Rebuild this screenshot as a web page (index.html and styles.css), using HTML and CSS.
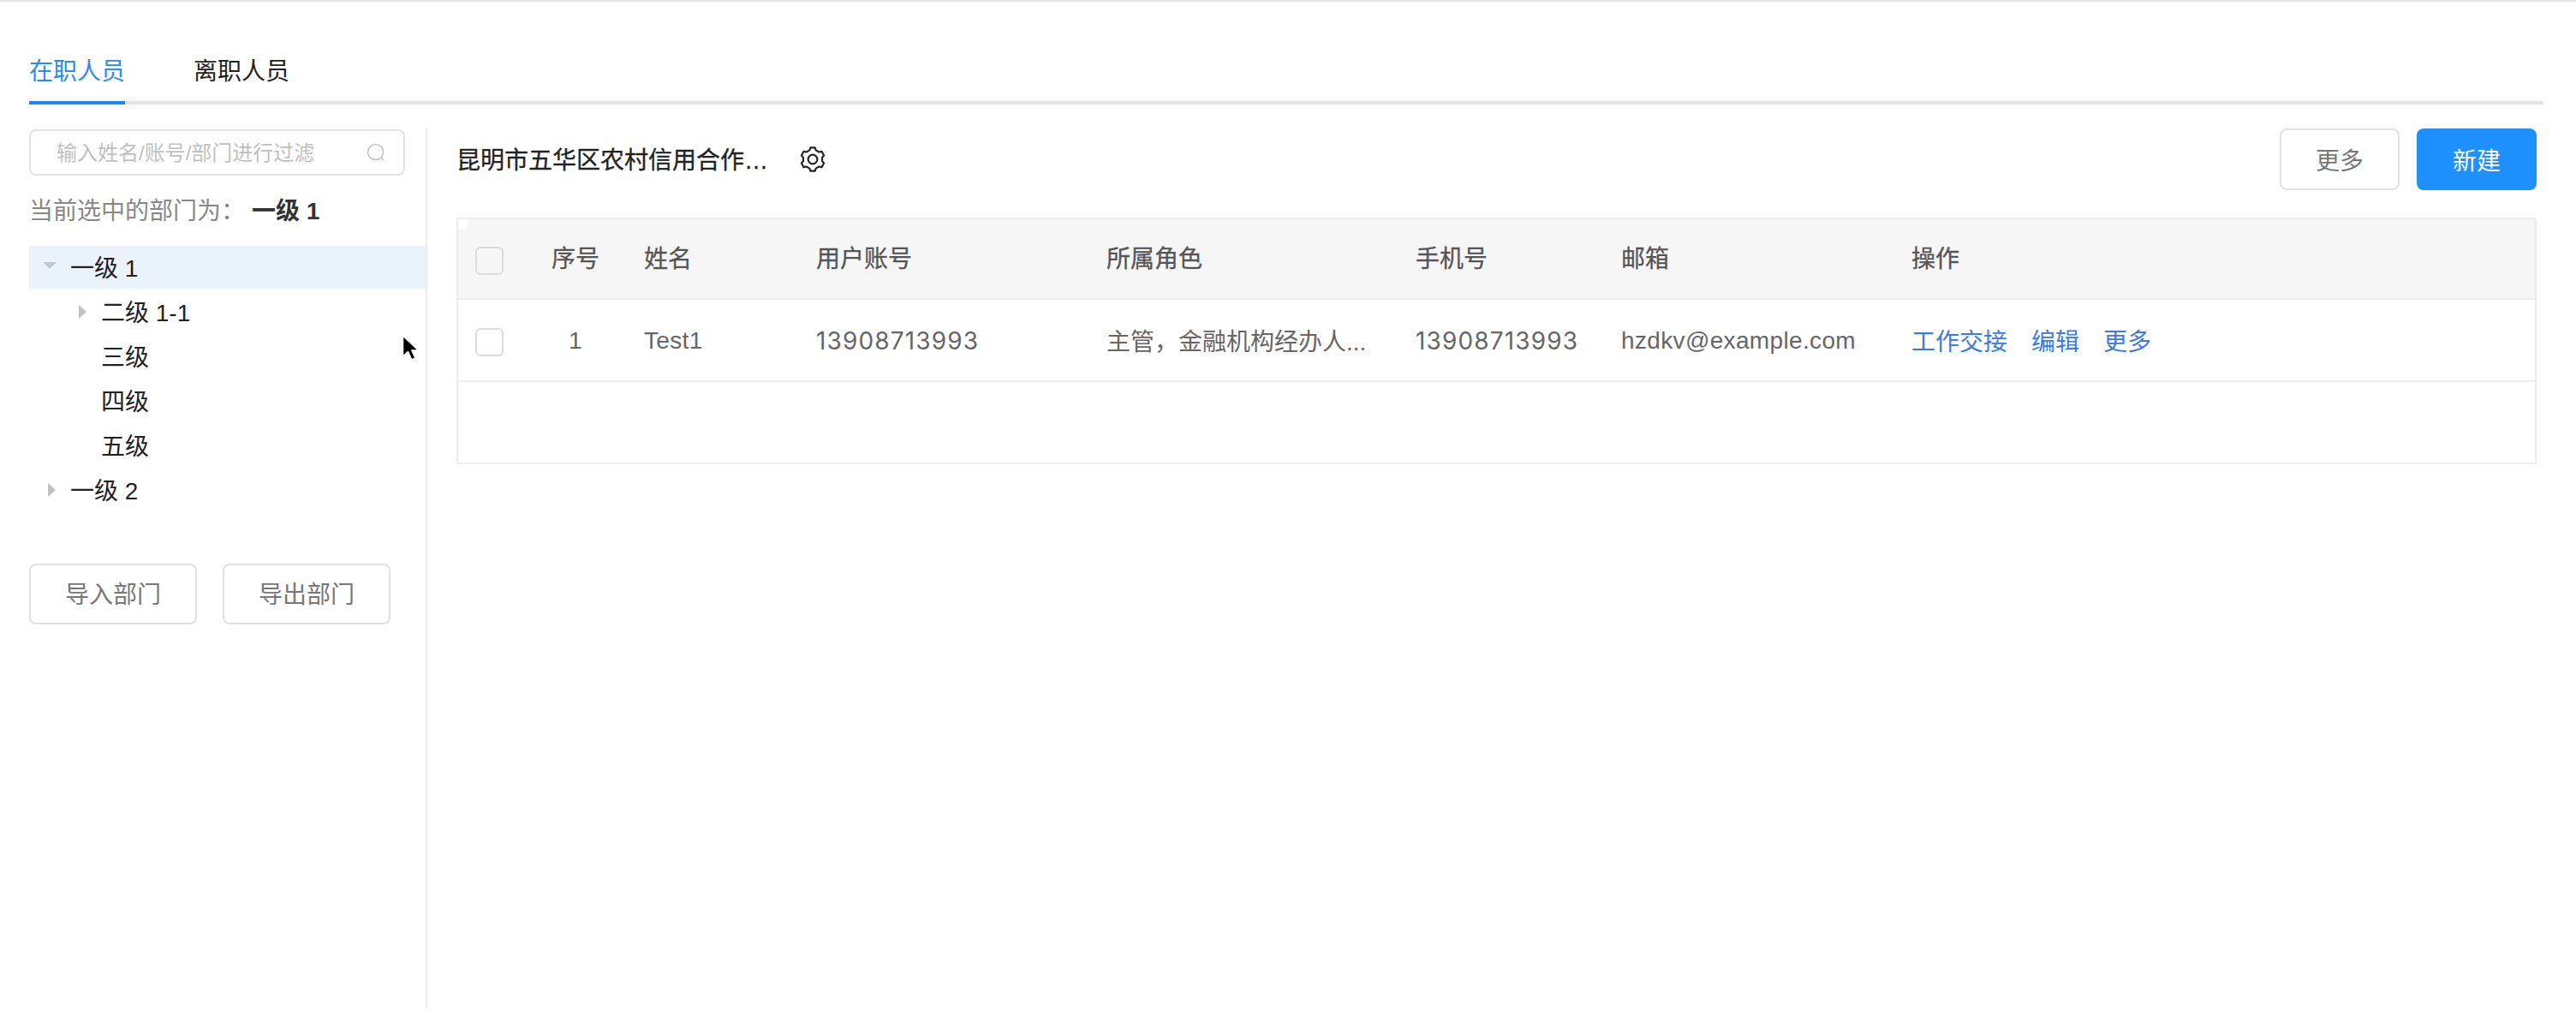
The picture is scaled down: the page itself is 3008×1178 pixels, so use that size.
FILE: index.html
```html
<!DOCTYPE html>
<html lang="zh-CN">
<head>
<meta charset="utf-8">
<title>人员管理</title>
<link rel="stylesheet" href="styles.css">
</head>
<body>
<div class="page">
  <nav class="tabs">
    <a class="tab tab-active">在职人员</a>
    <a class="tab">离职人员</a>
  </nav>
  <div class="content">
    <aside class="sidebar">
      <div class="search">
        <span class="search-text">输入姓名/账号/部门进行过滤</span>
        <svg class="search-icon" viewBox="0 0 22 22" width="22" height="22"><circle cx="10.5" cy="10.5" r="9" fill="none" stroke="#c4c4c4" stroke-width="1.6"/><path d="M17 17l3 3" stroke="#c4c4c4" stroke-width="1.6" stroke-linecap="round"/></svg>
      </div>
      <div class="current"><span>当前选中的部门为：</span><b class="current-value">一级 1</b></div>
      <ul class="tree">
        <li class="node node-selected"><i class="caret caret-down"></i>一级 1</li>
        <li class="node node-child"><i class="caret caret-right"></i>二级 1-1</li>
        <li class="node node-child"><i class="caret"></i>三级</li>
        <li class="node node-child"><i class="caret"></i>四级</li>
        <li class="node node-child"><i class="caret"></i>五级</li>
        <li class="node"><i class="caret caret-right"></i>一级 2</li>
      </ul>
      <div class="side-actions">
        <button class="btn btn-side">导入部门</button>
        <button class="btn btn-side">导出部门</button>
      </div>
    </aside>
    <main class="main">
      <div class="toolbar">
        <div class="org">
          <span class="org-name">昆明市五华区农村信用合作…</span>
          <svg class="gear" viewBox="0 0 28 28" width="30" height="30" fill="none" stroke="#222" stroke-width="2" stroke-linejoin="round"><path d="M11.520 1.240H16.480L17.420 4.070L20.890 6.080L23.810 5.470L26.290 9.770L24.310 12V16L26.290 18.230L23.810 22.530L20.890 21.920L17.420 23.930L16.480 26.760H11.520L10.580 23.930L7.110 21.920L4.190 22.530L1.710 18.230L3.690 16V12L1.710 9.770L4.190 5.470L7.110 6.080L10.580 4.070Z"/><circle cx="14" cy="14" r="5"/></svg>
        </div>
        <div class="toolbar-actions">
          <button class="btn btn-more">更多</button>
          <button class="btn btn-primary">新建</button>
        </div>
      </div>
      <div class="table">
        <span class="table-notch"></span>
        <div class="row row-head">
          <div class="cell cell-check"><span class="check"></span></div>
          <div class="cell cell-center">序号</div>
          <div class="cell">姓名</div>
          <div class="cell">用户账号</div>
          <div class="cell">所属角色</div>
          <div class="cell">手机号</div>
          <div class="cell">邮箱</div>
          <div class="cell">操作</div>
        </div>
        <div class="row row-body">
          <div class="cell cell-check"><span class="check check-white"></span></div>
          <div class="cell cell-center"><span class="latin">1</span></div>
          <div class="cell"><span class="latin">Test1</span></div>
          <div class="cell"><span class="num">13908713993</span></div>
          <div class="cell">主管，金融机构经办人...</div>
          <div class="cell"><span class="num">13908713993</span></div>
          <div class="cell"><span class="latin">hzdkv@example.com</span></div>
          <div class="cell cell-links"><a class="link">工作交接</a><a class="link">编辑</a><a class="link">更多</a></div>
        </div>
        <div class="row-empty"></div>
      </div>
    </main>
  </div>
  <svg class="cursor" viewBox="0 0 22 34" width="22" height="34"><path d="M2.500 2v24l6-5.500 4.200 9.500 4.300-2-4.200-9h7.700z" fill="#000" stroke="#fff" stroke-width="1.500" stroke-linejoin="round"/></svg>
</div>
</body>
</html>
```
FILE: styles.css
```css
* { box-sizing: border-box; }
html, body { margin: 0; height: 100%; background: #fff; }
body {
  font-family: "Liberation Sans", "Noto Sans CJK SC", sans-serif;
  font-size: 28px;
  color: #222;
  overflow: hidden;
}
.page {
  position: relative;
  height: 1178px;
  border-top: 2px solid #e6e6e6;
  padding: 0 38px 0 34px;
  display: flex;
  flex-direction: column;
}
.tabs {
  display: flex;
  gap: 80px;
  height: 120px;
  padding-top: 60px;
  border-bottom: 4px solid #e4e4e4;
}
.tab {
  width: 112px;
  height: 60px;
  line-height: 43px;
  text-align: center;
  white-space: nowrap;
  color: #222;
  border-bottom: 4px solid transparent;
}
.tab-active { color: #2a8cf0; border-bottom-color: #1f86ee; }
.content {
  flex: 1;
  display: flex;
  padding-top: 28px;
  min-height: 0;
}
.sidebar {
  width: 465px;
  flex: none;
  border-right: 2px solid #ececec;
}
.search {
  width: 439px;
  height: 54px;
  margin-top: 1px;
  padding: 0 21px 0 30px;
  border: 2px solid #e3e3e3;
  border-radius: 8px;
  display: flex;
  align-items: center;
  justify-content: space-between;
}
.search-text { font-size: 24px; color: #bfbfbf; white-space: nowrap; padding-bottom: 3px; }
.search-icon { display: block; }
.current {
  display: flex;
  gap: 8px;
  height: 40px;
  margin-top: 22px;
  line-height: 40px;
  color: #888;
  white-space: nowrap;
}
.current span { width: 252px; }
.current-value { color: #333; font-weight: 700; }
.tree { list-style: none; margin: 20px 0 0; padding: 0; }
.node {
  display: flex;
  align-items: center;
  height: 52px;
  padding: 0 0 2px 15px;
  white-space: nowrap;
  color: #222;
}
.node-selected { height: 50px; margin-bottom: 1px; background: #eaf3fb; }
.node-child { padding-left: 51px; }
.caret {
  display: block;
  flex: none;
  width: 33px;
  height: 16px;
  position: relative;
}
.caret-down::before {
  content: "";
  position: absolute;
  left: 1px;
  top: 3px;
  border: 8px solid transparent;
  border-top: 8px solid #c0c8d0;
  border-bottom: 0;
}
.caret-right::before {
  content: "";
  position: absolute;
  left: 7px;
  top: 1px;
  border: 8px solid transparent;
  border-left: 9px solid #c2c2c2;
  border-right: 0;
}
.side-actions {
  display: flex;
  gap: 30px;
  margin-top: 60px;
}
.btn {
  font: inherit;
  padding: 0;
  border-radius: 8px;
  background: #fff;
  white-space: nowrap;
}
.btn-side {
  width: 196px;
  height: 71px;
  border: 2px solid #e0e0e0;
  color: #777;
  padding-bottom: 3px;
}
.main {
  flex: 1;
  min-width: 0;
  padding: 0 8px 0 34px;
}
.toolbar {
  display: flex;
  justify-content: space-between;
  align-items: center;
  height: 72px;
}
.org { display: flex; align-items: center; gap: 37px; }
.org-name { width: 364px; padding-bottom: 3px; white-space: nowrap; color: #222; font-weight: 400; -webkit-text-stroke: 0.3px #222; }
.gear { display: block; }
.toolbar-actions { display: flex; gap: 20px; }
.btn-more {
  width: 140px;
  height: 72px;
  border: 2px solid #e2e2e2;
  color: #777;
}
.btn-primary {
  width: 140px;
  height: 72px;
  border: 0;
  background: #1e90ff;
  color: #fff;
}
.table {
  position: relative;
  margin-top: 32px;
  border: 2px solid #ececec;
  border-radius: 2px;
}
.table-notch {
  position: absolute;
  left: 0;
  top: 0;
  width: 11px;
  height: 11px;
  background: #fff;
}
.row {
  display: grid;
  grid-template-columns: 89px 96px 201px 339px 361px 240px 339px 1fr;
  align-items: center;
  height: 96px;
  border-bottom: 2px solid #ececec;
}
.row-head {
  height: 94px;
  padding-bottom: 4px;
  background: #f6f6f6;
  color: #555;
  -webkit-text-stroke: 0.3px #555;
}
.row-head .cell-check { padding-top: 8px; }
.row-body { color: #666; }
.row-body .cell-check { padding-top: 4px; }
.row-empty { height: 94px; }
.cell { padding-left: 32px; white-space: nowrap; }
.cell-center { padding-left: 0; text-align: center; }
.cell-check { padding-left: 20px; display: flex; align-items: center; }
.check {
  display: block;
  width: 33px;
  height: 33px;
  border: 2px solid #dcdcdc;
  border-radius: 6px;
}
.check-white { background: #fff; }
.latin { display: block; padding-top: 2px; letter-spacing: 0.35px; }
.num {
  display: block;
  padding-top: 2px;
  font-family: "Inter", "Liberation Sans", sans-serif;
  font-size: 28px;
  letter-spacing: 1.15px;
}
.cell-links { display: flex; gap: 28px; }
.link { color: #3c7ae0; }
.cursor {
  position: absolute;
  left: 468px;
  top: 388px;
}
```
